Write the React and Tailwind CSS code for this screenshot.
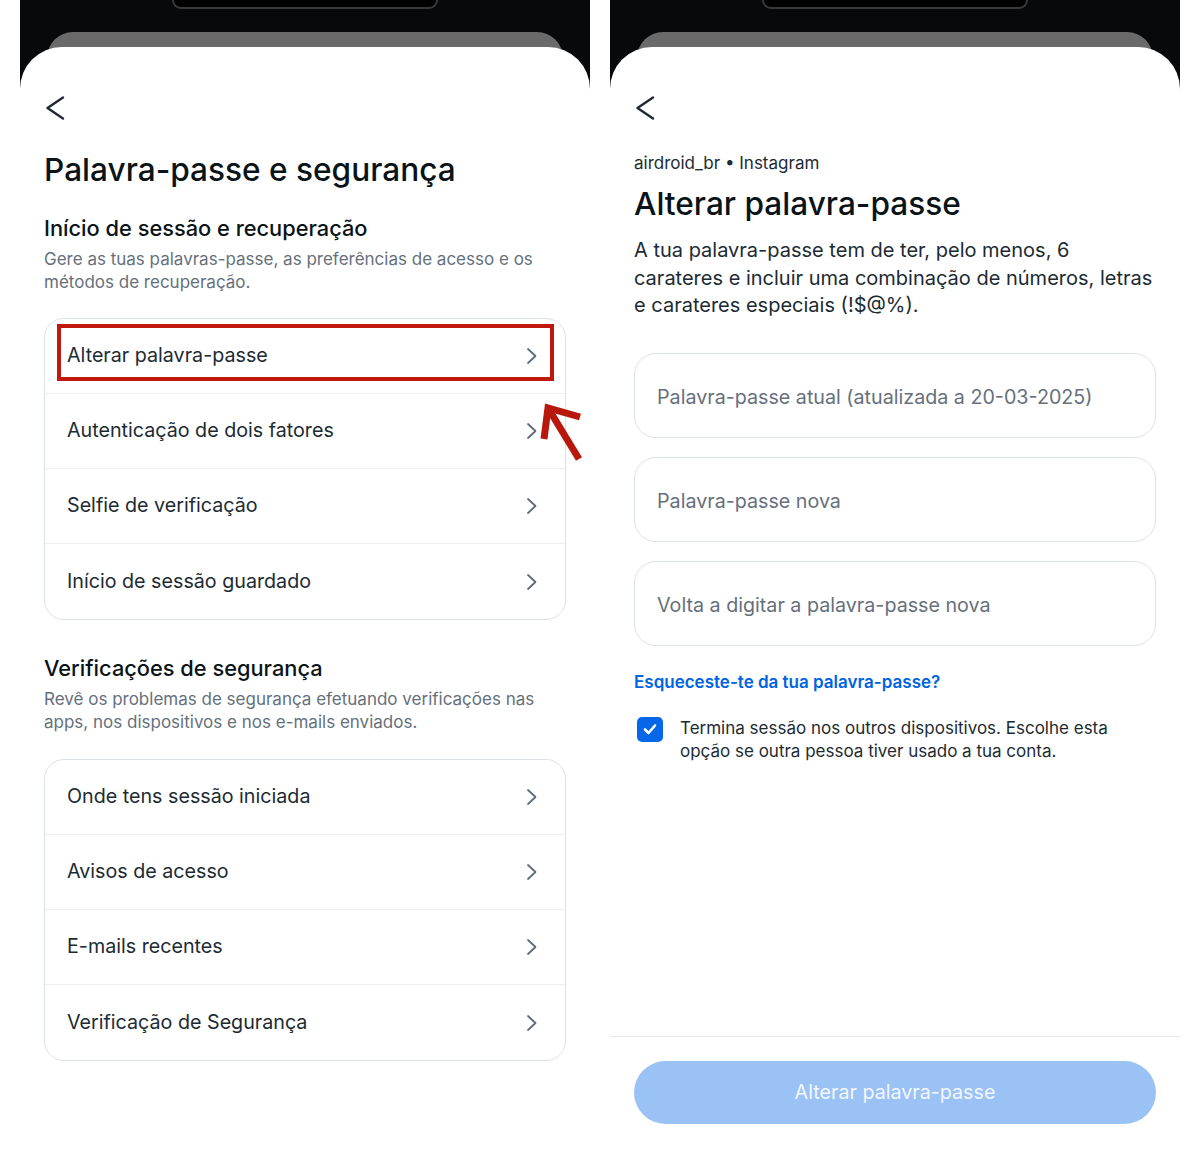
import React from 'react';

const BackArrow = () => (
    <svg width="24" height="24" viewBox="0 0 24 24" fill="none" className="block">
        <path d="M19 1.5 L3.5 12 L19 22.5" stroke="#1c2b33" strokeWidth="2.4" strokeLinecap="round" strokeLinejoin="round" />
    </svg>
);

const Chevron = () => (
    <svg width="14" height="18" viewBox="0 0 14 18" fill="none" className="block">
        <path d="M3 2 L10.5 9 L3 16" stroke="#5f6b7a" strokeWidth="1.8" strokeLinecap="round" strokeLinejoin="round" />
    </svg>
);

function PhoneTop() {
    return (
        <div className="flex flex-col items-center">
            <div className="w-[266px] h-[9px] bg-black border-x-2 border-b-2 border-[#3a3a3c] rounded-b-[14px]" />
            <div className="self-stretch mx-[27px] mt-[23px] h-[40px] bg-[#6a6a6a] rounded-t-[26px]" />
        </div>
    );
}

function Row({ label, last }) {
    return (
        <div className={`h-[75px] flex items-center justify-between pl-[22px] pr-[26px] ${last ? '' : 'border-b border-[#edf0f3]'}`}>
            <span className="text-[19.7px] text-[#1c2b33]">{label}</span>
            <Chevron />
        </div>
    );
}

function Card({ items, children }) {
    return (
        <div className="relative border-[1.5px] border-[#dde2e8] rounded-[20px]">
            {items.map((it, i) => (
                <Row key={it} label={it} last={i === items.length - 1} />
            ))}
            {children}
        </div>
    );
}

function SecurityPanel() {
    return (
        <div className="w-[570px] h-[1156px] bg-[#08090b] flex flex-col overflow-hidden">
            <PhoneTop />
            <div className="relative -mt-[25px] flex-1 bg-white rounded-t-[42px] px-[24px]">
                <div className="mt-[49px]">
                    <BackArrow />
                </div>
                <h1 className="mt-[30px] text-[31.6px] leading-[40px] font-medium text-[#0a1317]">Palavra-passe e segurança</h1>

                <h2 className="mt-[24px] text-[21.8px] leading-[28px] font-medium text-[#0a1317]">Início de sessão e recuperação</h2>
                <p className="mt-[6px] text-[17px] leading-[23px] text-[#65707c]">
                    Gere as tuas palavras-passe, as preferências de acesso e os métodos de recuperação.
                </p>
                <div className="mt-[24px]">
                    <Card items={['Alterar palavra-passe', 'Autenticação de dois fatores', 'Selfie de verificação', 'Início de sessão guardado']}>
                        <div className="absolute left-[12px] top-[5px] w-[497px] h-[57px] border-4 border-[#c0180c]" />
                        <svg className="absolute left-[494px] top-[80px]" width="50" height="70" viewBox="0 0 50 70" fill="none">
                            <path d="M40 60 L9 9" stroke="#b8180c" strokeWidth="7" />
                            <path d="M5 40 L9 9 L41 18" stroke="#b8180c" strokeWidth="7" strokeLinejoin="miter" />
                        </svg>
                    </Card>
                </div>

                <h2 className="mt-[34px] text-[21.8px] leading-[28px] font-medium text-[#0a1317]">Verificações de segurança</h2>
                <p className="mt-[6px] text-[17px] leading-[23px] text-[#65707c]">
                    Revê os problemas de segurança efetuando verificações nas apps, nos dispositivos e nos e-mails enviados.
                </p>
                <div className="mt-[25px]">
                    <Card items={['Onde tens sessão iniciada', 'Avisos de acesso', 'E-mails recentes', 'Verificação de Segurança']} />
                </div>
            </div>
        </div>
    );
}

function Field({ placeholder }) {
    return (
        <div className="h-[85px] border-[1.5px] border-[#dde2e8] rounded-[22px] flex items-center px-[22px] pt-[5px]">
            <span className="text-[19.7px] text-[#65707c]">{placeholder}</span>
        </div>
    );
}

function PasswordPanel() {
    return (
        <div className="w-[570px] h-[1156px] bg-[#08090b] flex flex-col overflow-hidden">
            <PhoneTop />
            <div className="relative -mt-[25px] flex-1 bg-white rounded-t-[42px] flex flex-col">
                <div className="px-[24px]">
                    <div className="mt-[49px]">
                        <BackArrow />
                    </div>
                    <p className="mt-[32px] text-[17px] leading-[22px] text-[#1c2b33]">airdroid_br • Instagram</p>
                    <h1 className="mt-[10px] text-[31.6px] leading-[40px] font-medium text-[#0a1317]">Alterar palavra-passe</h1>
                    <p className="mt-[13px] text-[20px] leading-[27.5px] text-[#1c2b33]">
                        A tua palavra-passe tem de ter, pelo menos, 6 carateres e incluir uma combinação de números, letras e carateres especiais (!$@%).
                    </p>
                    <div className="mt-[33px] flex flex-col gap-[19px]">
                        <Field placeholder="Palavra-passe atual (atualizada a 20-03-2025)" />
                        <Field placeholder="Palavra-passe nova" />
                        <Field placeholder="Volta a digitar a palavra-passe nova" />
                    </div>
                    <p className="mt-[25px] text-[17px] leading-[22px] font-semibold text-[#0064e0]">Esqueceste-te da tua palavra-passe?</p>
                    <div className="mt-[24px] flex items-start gap-[17px] pl-[3px]">
                        <div className="w-[26px] h-[25px] rounded-[5px] bg-[#0866e8] flex items-center justify-center shrink-0">
                            <svg width="16" height="16" viewBox="0 0 16 16" fill="none">
                                <path d="M3 8.5 L6.5 12 L13 4.5" stroke="white" strokeWidth="2.6" strokeLinecap="round" strokeLinejoin="round" />
                            </svg>
                        </div>
                        <p className="text-[17px] leading-[23px] text-[#1c2b33]">
                            Termina sessão nos outros dispositivos. Escolhe esta opção se outra pessoa tiver usado a tua conta.
                        </p>
                    </div>
                </div>
                <div className="mt-auto border-t border-[#e6e9ec] px-[24px] pt-[24px] pb-[32px]">
                    <div className="h-[63px] rounded-full bg-[#9bc2f4] flex items-center justify-center">
                        <span className="text-[19.7px] text-[#f2f7ff]">Alterar palavra-passe</span>
                    </div>
                </div>
            </div>
        </div>
    );
}

export default function App() {
    return (
        <div className="w-[1200px] h-[1156px] bg-white flex gap-[20px] px-[20px] font-[Inter,sans-serif] overflow-hidden">
            <SecurityPanel />
            <PasswordPanel />
        </div>
    );
}
